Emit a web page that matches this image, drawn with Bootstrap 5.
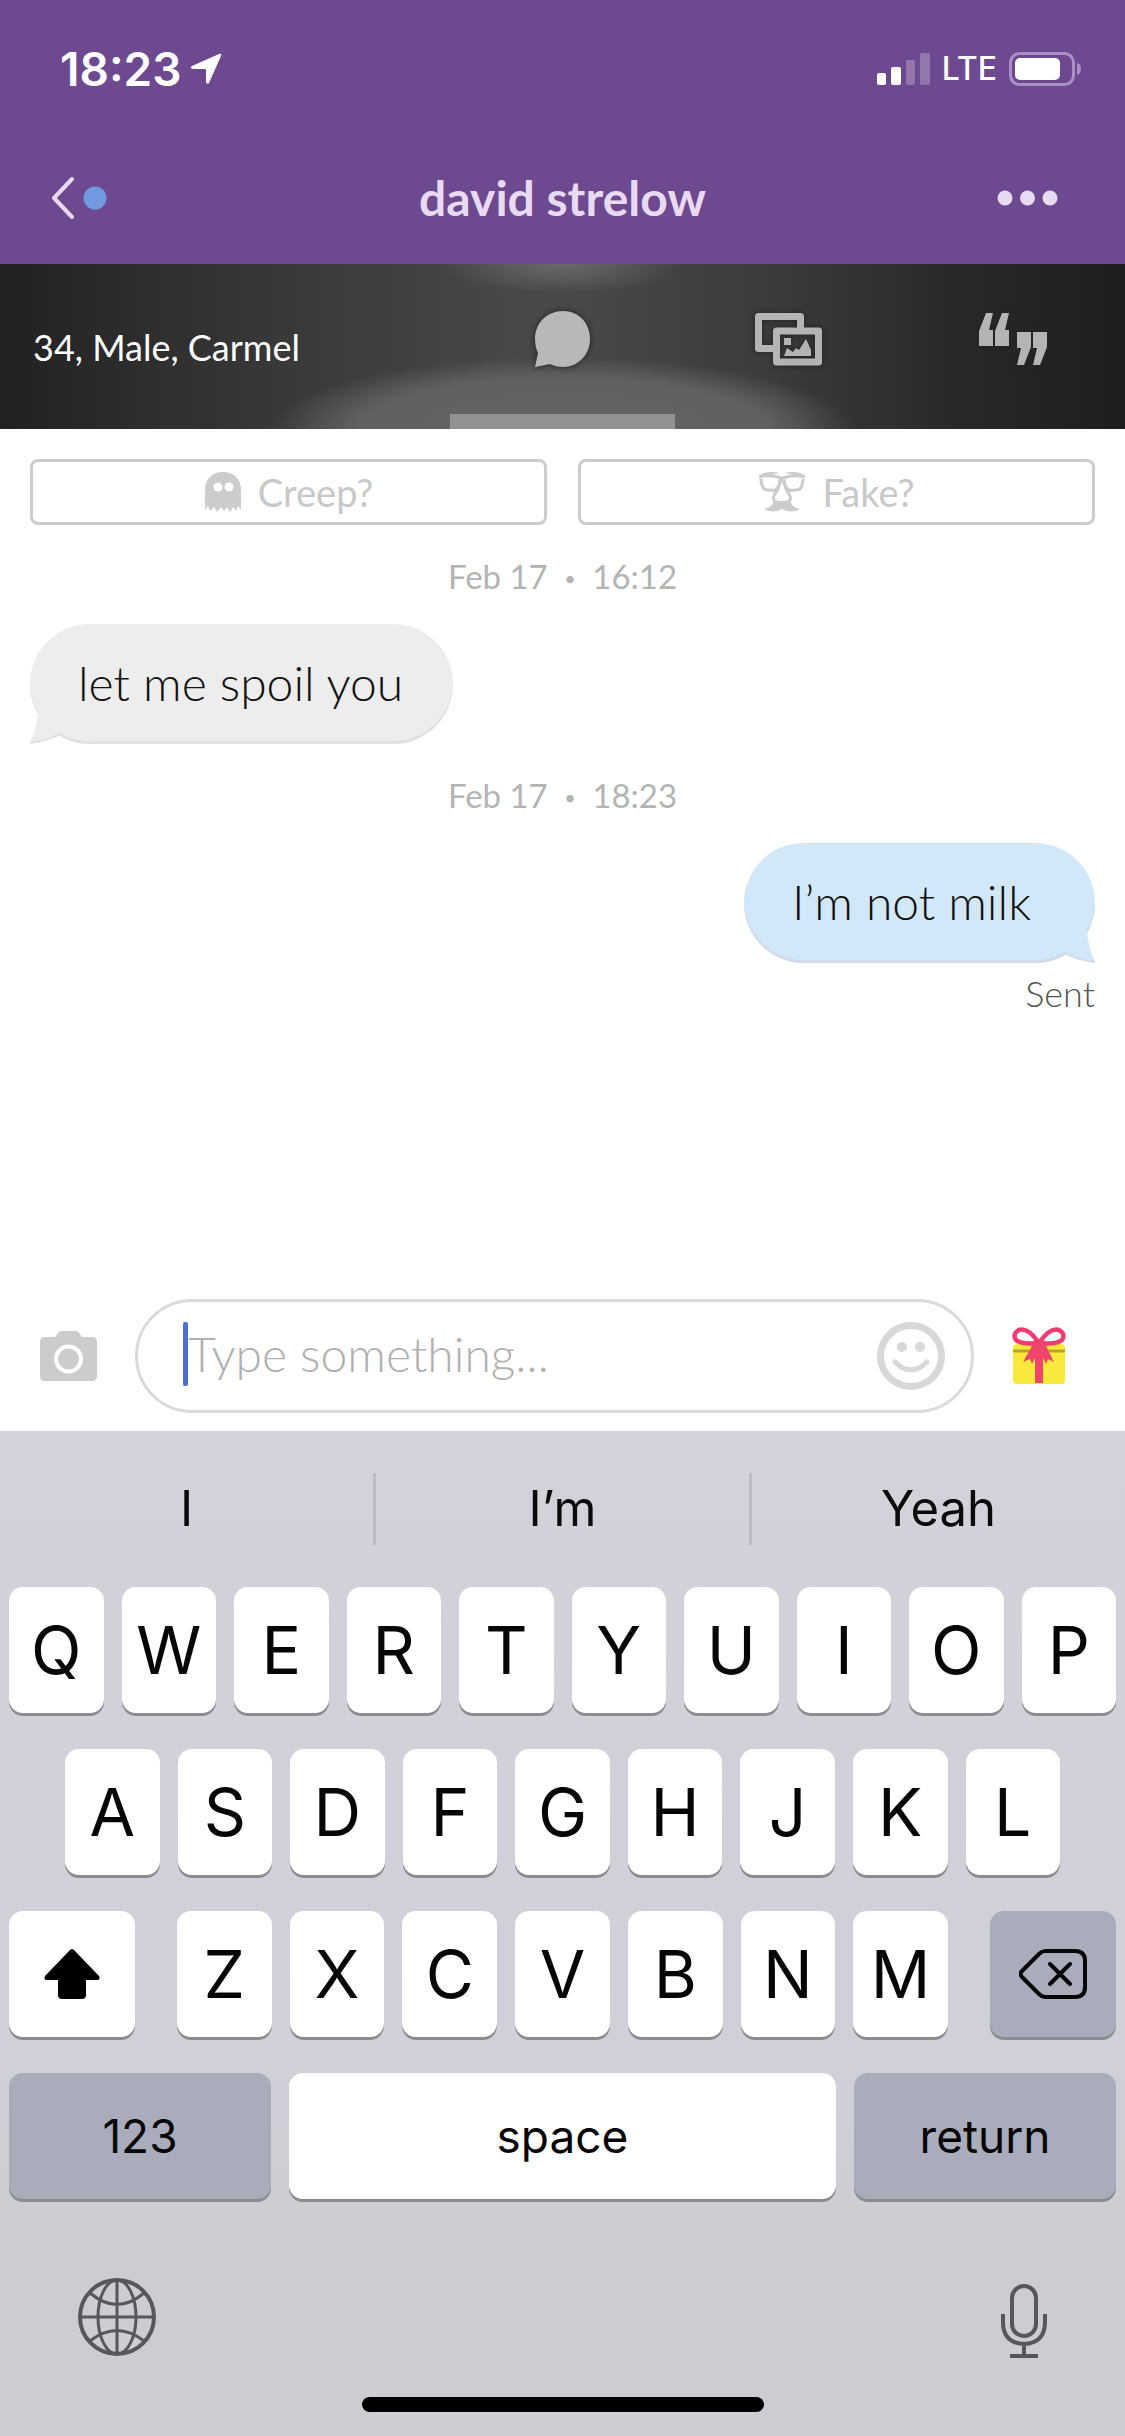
<!DOCTYPE html>
<html lang="en">
<head>
<meta charset="utf-8">
<meta name="viewport" content="width=device-width, initial-scale=1">
<title>david strelow</title>
<link href="https://cdn.jsdelivr.net/npm/bootstrap@5.3.0/dist/css/bootstrap.min.css" rel="stylesheet">
<style>
  body { font-family: Lato, "Open Sans", sans-serif; background: #fff; color: #111; }
  svg { display: block; flex: none; }
  .system-font { font-family: Inter, "Liberation Sans", sans-serif; }
  .plain { border: 0; background: none; padding: 0; color: inherit; }

  .app-header { background: #6d4990; color: #e9daf3; padding-bottom: 6px; }
  .status-row { height: 138px; padding: 0 43px 0 60px; color: #fff; }
  .clock { font-size: 46px; line-height: 48px; font-weight: 600; }
  .carrier { font-size: 32px; line-height: 48px; font-weight: 500; }
  .nav-row { display: grid; grid-template-columns: 1fr auto 1fr; align-items: center; height: 120px; padding: 0 51px; }
  .nav-row h1 { font-size: 48px; line-height: 60px; font-weight: 700; margin: 0; }

  .profile { height: 165px; color: #fff;
    background:
      radial-gradient(ellipse 120px 30px at 50% 0, #6a6868 0, #6a686800 100%),
      radial-gradient(ellipse 290px 72px at 50% 100%, #656363 0, #626060 70%, #62606000 100%),
      linear-gradient(90deg, #212121 0, #2d2d2d 12%, #3b3b3b 28%, #494747 45%, #494747 52%, #3c3c3c 68%, #2a2a2a 84%, #1e1e1e 100%); }
  .profile-info { flex: 0 0 40%; padding-left: 33px; font-size: 36px; line-height: 44px; }
  .profile-tab { flex: 1 1 0; height: 100%; border-bottom: 15px solid transparent; color: #b4b4b4; }
  .profile-tab svg { filter: drop-shadow(0 0 3px #222); }
  .profile-tab.active { border-bottom-color: #919191; color: #b9b7b7; }

  .chat { padding: 30px; }
  .flag-btn { --bs-btn-border-radius: 8px; --bs-btn-color: #c8c8c8; --bs-btn-border-color: #ccc; --bs-btn-border-width: 3px;
    --bs-btn-font-size: 38px; --bs-btn-line-height: 44px; --bs-btn-padding-y: 8px; flex: 1 1 0; }
  .flags { gap: 31px; }
  .stamp { font-size: 33px; line-height: 42px; color: #b4b4b4; margin: 30px 0 27px; text-align: center; }
  .stamp span { font-size: 20px; margin: 0 8px; vertical-align: 3px; line-height: 20px; }
  .bubble { position: relative; height: 120px; padding: 0 48px; border-radius: 60px; font-size: 48px; line-height: 118px; font-weight: 300; }
  .bubble-in { background: #ededed; box-shadow: inset 0 -3px 0 #e1e1e2; padding-right: 50px; }
  .bubble-out { background: #d2e7f8; box-shadow: inset 0 -3px 0 #d0dae8; padding-right: 64px; }
  .tail { position: absolute; bottom: 0; }
  .sent { font-size: 36px; line-height: 44px; font-weight: 300; color: #555; margin-top: 8px; }

  .composer { padding: 0 59px 18px 40px; gap: 38px; }
  .entry { height: 114px; border: 3px solid #dadada; border-radius: 57px; padding: 0 26px 4px 45px; }
  .entry button { padding-top: 4px; }
  .caret { width: 5px; height: 64px; border-radius: 2px; background: #4a6fd0; flex: none; }
  .entry input { border: 0; outline: 0; background: none; padding: 0; font-size: 48px; line-height: 60px; font-weight: 300; min-width: 0; }
  .entry input::placeholder { color: #b0b0b0; opacity: 1; }

  .keyboard { background: linear-gradient(#d2d3da 0, #d0d1d8 60%, #cccdd3 80%); color: #0a0a0a; }
  .suggestions { height: 156px; }
  .suggestions button { flex: 1 1 0; font-size: 49px; line-height: 60px; }
  .suggestions i { width: 3px; height: 72px; background: #babbc1; }
  .key-rows { padding: 0 9px; gap: 36px; }
  .key-row { gap: 18px; }
  .key-row.inset { padding: 0 56px; }
  .key-row.spread { gap: 42px; }
  .keycap { --bs-btn-padding-x: 0; --bs-btn-padding-y: 0; --bs-btn-border-width: 0; --bs-btn-border-radius: 14px;
    --bs-btn-bg: #fff; --bs-btn-color: #060606; --bs-btn-font-size: 66px; --bs-btn-line-height: 80px;
    --bs-btn-hover-bg: #fff; --bs-btn-hover-color: #060606;
    flex: 1 1 0; min-width: 0; height: 126px; box-shadow: 0 3px 0 #8b8c92; }
  .keycap-word { --bs-btn-font-size: 46px; --bs-btn-line-height: 60px; }
  .keycap-dim { --bs-btn-bg: #a9adbb; --bs-btn-hover-bg: #a9adbb; }
  .keycap-side { flex: 0 0 126px; }
  .keycap-wide { flex: 0 0 262px; }
  .tools { padding: 79px 78px 38px; color: #55575d; }
  .home-bar { width: 402px; height: 15px; border-radius: 8px; background: #000; margin: 0 auto 24px; }
</style>
<script src="https://cdn.jsdelivr.net/npm/bootstrap@5.3.0/dist/js/bootstrap.bundle.min.js"></script>
</head>
<body>
<div class="d-flex flex-column min-vh-100">

  <header class="app-header">
    <div class="status-row system-font d-flex align-items-center justify-content-between">
      <div class="d-flex align-items-center gap-2">
        <span class="clock">18:23</span>
        <svg width="32" height="32" viewBox="0 0 32 32" fill="#fff"><path d="M29 1Q32 0 31 3L19 30Q17 32 16 29V17Q16 16 15 16H3Q-1 15 2 13Z"/></svg>
      </div>
      <div class="d-flex align-items-center gap-2">
        <svg class="me-1" width="53" height="32" viewBox="0 0 53 32" fill="#fff"><rect y="20" width="9" height="12" rx="2"/><rect x="14" y="14" width="10" height="18" rx="2"/><g opacity=".25"><rect x="29" y="7" width="9" height="25" rx="2"/><rect x="43" width="10" height="32" rx="2"/></g></svg>
        <span class="carrier me-1">LTE</span>
        <svg width="73" height="34" viewBox="0 0 73 34"><rect x="1.500" y="1.500" width="63" height="31" rx="9" fill="none" stroke="#a98fc3" stroke-width="3"/><rect x="6" y="6" width="45" height="22" rx="5" fill="#fff"/><path d="M68 11Q72 12 72 17T68 23Z" fill="#a98fc3"/></svg>
      </div>
    </div>
    <nav class="nav-row">
      <button class="plain d-flex align-items-center gap-2" aria-label="Back">
        <svg width="24" height="44" viewBox="0 0 24 44" fill="none" stroke="#e9daf3" stroke-width="4" stroke-linecap="round" stroke-linejoin="round"><path d="M21 3L3 22L21 41"/></svg>
        <svg width="24" height="24" viewBox="0 0 24 24"><circle cx="12" cy="12" r="11.500" fill="#7199e0"/></svg>
      </button>
      <h1>david strelow</h1>
      <button class="plain d-flex justify-content-end pe-3" aria-label="More">
        <svg width="61" height="16" viewBox="0 0 61 16" fill="#e9daf3"><circle cx="8" cy="8" r="7.500"/><circle cx="30.500" cy="8" r="7.500"/><circle cx="53" cy="8" r="7.500"/></svg>
      </button>
    </nav>
  </header>

  <section class="profile d-flex align-items-center">
    <div class="profile-info">34, Male, Carmel</div>
    <button class="plain profile-tab active d-flex align-items-center justify-content-center" aria-label="Chat">
      <svg width="57" height="58" viewBox="0 0 57 58" fill="currentColor"><path d="M29 1C45 1 56 13 56 29S44 57 29 57C24 57 20 56 16 54L1 57L4 43C2 39 1 34 1 29C1 13 13 1 29 1Z"/></svg>
    </button>
    <button class="plain profile-tab d-flex align-items-center justify-content-center" aria-label="Photos">
      <svg width="68" height="54" viewBox="0 0 68 54"><path d="M22 36.500H4.500V4.500H46.500V18" fill="none" stroke="currentColor" stroke-width="7" stroke-linejoin="round"/><rect x="22.500" y="19" width="42" height="31" fill="none" stroke="currentColor" stroke-width="7" stroke-linejoin="round"/><path d="M30 26H37V33H30ZM30 44L33 36L39 40L42 36L45 38L52 27L57 38V44Z" fill="currentColor"/></svg>
    </button>
    <button class="plain profile-tab d-flex align-items-center justify-content-center" aria-label="Quotes">
      <svg width="70" height="54" viewBox="0 0 70 54" fill="currentColor"><path id="quote-pair" d="M8 1H15L11 18H15V34H1V19ZM24 1H31L27 18H31V34H17V19Z"/><use href="#quote-pair" transform="rotate(180 35 27)"/></svg>
    </button>
  </section>

  <main class="chat flex-grow-1">
    <div class="flags d-flex">
      <button class="btn flag-btn d-flex align-items-center justify-content-center">
        <svg class="me-3" width="38" height="40" viewBox="0 0 38 40"><path fill="#ccc" d="M1 18C1 7 8 0 19 0S37 7 37 18V38L34 34L32 39L29 35L26 40L23 35L20 39L17 35L13 40L10 35L6 39L4 34L1 38Z"/><g fill="#fff"><circle cx="14" cy="15" r="4.500"/><circle cx="25" cy="15" r="4.500"/></g></svg>
        Creep?
      </button>
      <button class="btn flag-btn d-flex align-items-center justify-content-center">
        <svg class="me-3" width="48" height="42" viewBox="0 0 48 42" fill="none" stroke="#ccc" stroke-width="3"><path fill="#ccc" stroke="none" d="M2 4Q8-1 22 2Q16 3 12 4Q7 4 2 7ZM46 4Q40-1 26 2Q32 3 36 4Q41 4 46 7ZM24 30L29 31L32 29Q34 37 42 38Q34 43 24 38Q14 43 6 38Q14 37 16 29L19 31Z"/><path d="M1 6Q12 3 23 7Q22 16 17 19Q11 20 6 18Q3 14 3 8M47 6Q36 3 25 7Q26 16 31 19Q37 20 42 18Q45 14 45 8M22 9Q21 18 17 23Q13 29 19 31L24 32L29 31Q35 29 31 23Q27 18 26 9"/></svg>
        Fake?
      </button>
    </div>

    <div class="stamp">Feb 17 <span>•</span> 16:12</div>
    <div class="d-flex">
      <div class="bubble bubble-in">let me spoil you
        <svg class="tail start-0" width="32" height="32" viewBox="0 0 32 32"><path fill="#ededed" d="M8 0Q7 16 0 31Q18 29 30 22V0Z"/><path fill="none" stroke="#e1e1e2" stroke-width="2" d="M0 31Q18 29 30 22"/></svg>
      </div>
    </div>
    <div class="stamp">Feb 17 <span>•</span> 18:23</div>
    <div class="d-flex flex-column align-items-end">
      <div class="bubble bubble-out">I’m not milk
        <svg class="tail end-0" width="32" height="32" viewBox="0 0 32 32"><path fill="#d2e7f8" d="M24 0Q25 16 32 31Q14 29 2 22V0Z"/><path fill="none" stroke="#d0dae8" stroke-width="2" d="M32 31Q14 29 2 22"/></svg>
      </div>
      <div class="sent">Sent</div>
    </div>
  </main>

  <form class="composer d-flex align-items-center">
    <button type="button" class="plain" aria-label="Camera">
      <svg width="57" height="50" viewBox="0 0 57 50"><path fill="#ccc" d="M5 6H15L18 2Q19 0 22 0H35Q38 0 39 2L42 6H52Q57 6 57 11V45Q57 50 52 50H5Q0 50 0 45V11Q0 6 5 6Z"/><circle cx="28.500" cy="28" r="12.500" fill="none" stroke="#fff" stroke-width="4"/></svg>
    </button>
    <div class="entry d-flex align-items-center flex-grow-1">
      <span class="caret"></span>
      <input class="flex-grow-1" type="text" placeholder="Type something..." aria-label="Message">
      <button type="button" class="plain" aria-label="Emoji">
        <svg width="68" height="68" viewBox="0 0 68 68" fill="none" stroke="#d8d8d8"><circle cx="34" cy="34" r="30.500" stroke-width="7"/><path d="M18 40Q34 56 50 40" stroke-width="5" stroke-linecap="round"/><g fill="#d8d8d8" stroke="none"><circle cx="25" cy="25" r="5"/><circle cx="43" cy="25" r="5"/></g></svg>
      </button>
    </div>
    <button type="button" class="plain" aria-label="Gift">
      <svg width="54" height="60" viewBox="0 0 54 60"><rect x="1" y="18" width="52" height="40" rx="4" fill="#f8e93a"/><path d="M1 25H53" stroke="#b9a52b" stroke-width="3"/><path d="M23 24H31V57H23Z" fill="#f0446c"/><path fill="none" stroke="#f03c72" stroke-width="4.500" stroke-linejoin="round" d="M27 17Q16 1 7 4Q0 8 4 14Q10 19 27 17Q38 1 47 4Q54 8 50 14Q44 19 27 17"/><path fill="#f0446c" d="M22 14H32L35 22L42 36L36 33L34 38L27 24L20 38L18 33L11 36L19 22Z"/></svg>
    </button>
  </form>

  <section class="keyboard system-font">
    <div class="suggestions d-flex align-items-center">
      <button class="plain">I</button><i></i>
      <button class="plain">I’m</button><i></i>
      <button class="plain">Yeah</button>
    </div>
    <div class="key-rows d-flex flex-column">
      <div class="key-row d-flex">
        <button class="btn keycap">Q</button><button class="btn keycap">W</button><button class="btn keycap">E</button><button class="btn keycap">R</button><button class="btn keycap">T</button><button class="btn keycap">Y</button><button class="btn keycap">U</button><button class="btn keycap">I</button><button class="btn keycap">O</button><button class="btn keycap">P</button>
      </div>
      <div class="key-row inset d-flex">
        <button class="btn keycap">A</button><button class="btn keycap">S</button><button class="btn keycap">D</button><button class="btn keycap">F</button><button class="btn keycap">G</button><button class="btn keycap">H</button><button class="btn keycap">J</button><button class="btn keycap">K</button><button class="btn keycap">L</button>
      </div>
      <div class="key-row spread d-flex">
        <button class="btn keycap keycap-side d-flex align-items-center justify-content-center" aria-label="Shift">
          <svg width="58" height="50" viewBox="0 0 58 50"><path d="M27 1Q29-1 31 1L56 27Q58 31 54 31H43V46Q43 50 39 50H19Q15 50 15 46V31H4Q0 31 2 27Z"/></svg>
        </button>
        <div class="key-row d-flex flex-grow-1">
          <button class="btn keycap">Z</button><button class="btn keycap">X</button><button class="btn keycap">C</button><button class="btn keycap">V</button><button class="btn keycap">B</button><button class="btn keycap">N</button><button class="btn keycap">M</button>
        </div>
        <button class="btn keycap keycap-side keycap-dim d-flex align-items-center justify-content-center" aria-label="Delete">
          <svg width="68" height="50" viewBox="0 0 68 50" fill="none" stroke="#060606" stroke-width="4" stroke-linecap="round" stroke-linejoin="round"><path d="M26 2H56Q66 2 66 12V38Q66 48 56 48H26Q23 48 20 45L3 28Q0 25 3 22L20 5Q23 2 26 2ZM31 15L51 35M51 15L31 35"/></svg>
        </button>
      </div>
      <div class="key-row d-flex">
        <button class="btn keycap keycap-word keycap-wide keycap-dim">123</button>
        <button class="btn keycap keycap-word">space</button>
        <button class="btn keycap keycap-word keycap-wide keycap-dim">return</button>
      </div>
    </div>
    <div class="tools d-flex align-items-start justify-content-between">
      <button class="plain" aria-label="Switch keyboard">
        <svg width="78" height="78" viewBox="0 0 78 78" fill="none" stroke="currentColor" stroke-width="3"><circle cx="39" cy="39" r="37" stroke-width="4"/><ellipse cx="39" cy="39" rx="19" ry="37"/><path d="M39 2V76M2 39H76M12 15Q39 38 66 15M12 63Q39 42 66 63"/></svg>
      </button>
      <button class="plain" aria-label="Dictate">
        <svg width="46" height="81" viewBox="0 0 46 81" fill="none" stroke="currentColor" stroke-width="4"><rect x="11" y="8" width="24" height="50" rx="12"/><path d="M2 36V44Q2 65 23 66Q44 65 44 44V36M23 66V77M9 78H37"/></svg>
      </button>
    </div>
    <div class="home-bar"></div>
  </section>
</div>
</body>
</html>
